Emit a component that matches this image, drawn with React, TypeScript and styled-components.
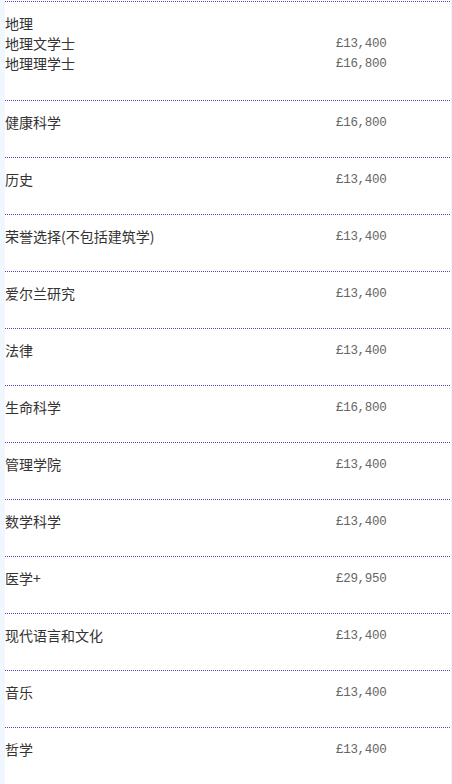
import styled, { createGlobalStyle } from 'styled-components';

const GlobalStyle = createGlobalStyle`
  html, body {
    margin: 0;
    padding: 0;
    background: #ffffff;
  }
`;

interface Fee {
  names: string[];
  prices: string[];
}

const fees: Fee[] = [
  { names: ['地理', '地理文学士', '地理理学士'], prices: ['', '£13,400', '£16,800'] },
  { names: ['健康科学'], prices: ['£16,800'] },
  { names: ['历史'], prices: ['£13,400'] },
  { names: ['荣誉选择(不包括建筑学)'], prices: ['£13,400'] },
  { names: ['爱尔兰研究'], prices: ['£13,400'] },
  { names: ['法律'], prices: ['£13,400'] },
  { names: ['生命科学'], prices: ['£16,800'] },
  { names: ['管理学院'], prices: ['£13,400'] },
  { names: ['数学科学'], prices: ['£13,400'] },
  { names: ['医学+'], prices: ['£29,950'] },
  { names: ['现代语言和文化'], prices: ['£13,400'] },
  { names: ['音乐'], prices: ['£13,400'] },
  { names: ['哲学'], prices: ['£13,400'] },
];

const Page = styled.div`
  width: 452px;
  height: 784px;
  overflow: hidden;
  display: flex;
  background: #ffffff;
`;

const LeftRail = styled.div`
  width: 5px;
  flex-shrink: 0;
  background: #f1f7fe;
`;

const RightRail = styled.div`
  width: 1px;
  flex-shrink: 0;
  background: #eef4fb;
`;

const Table = styled.div`
  flex: 1;
  padding-top: 1px;
  margin-right: 1px;
`;

const Row = styled.div<{ $bottom: number }>`
  display: grid;
  grid-template-columns: 331px 1fr;
  align-items: start;
  border-top: 1px dotted #5242bc;
  padding: 11px 0 ${({ $bottom }) => $bottom}px;
`;

const Names = styled.div`
  font-family: 'Noto Sans CJK SC', 'Noto Sans', sans-serif;
  font-size: 14px;
  line-height: 20px;
  color: #333333;
`;

const Prices = styled.div`
  font-family: 'Liberation Mono', 'DejaVu Sans Mono', monospace;
  font-size: 12.5px;
  letter-spacing: -0.3px;
  line-height: 20px;
  color: #666666;
  padding-top: 1px;
  margin-bottom: -1px;
`;

const Line = styled.div`
  height: 20px;
  white-space: nowrap;
`;

export default function App() {
  return (
    <Page>
      <GlobalStyle />
      <LeftRail />
      <Table>
        {fees.map((fee, i) => (
          <Row key={i} $bottom={fee.names.length > 1 ? 27 : 25}>
            <Names>
              {fee.names.map((n) => (
                <Line key={n}>{n}</Line>
              ))}
            </Names>
            <Prices>
              {fee.prices.map((p, j) => (
                <Line key={j}>{p}</Line>
              ))}
            </Prices>
          </Row>
        ))}
      </Table>
      <RightRail />
    </Page>
  );
}
